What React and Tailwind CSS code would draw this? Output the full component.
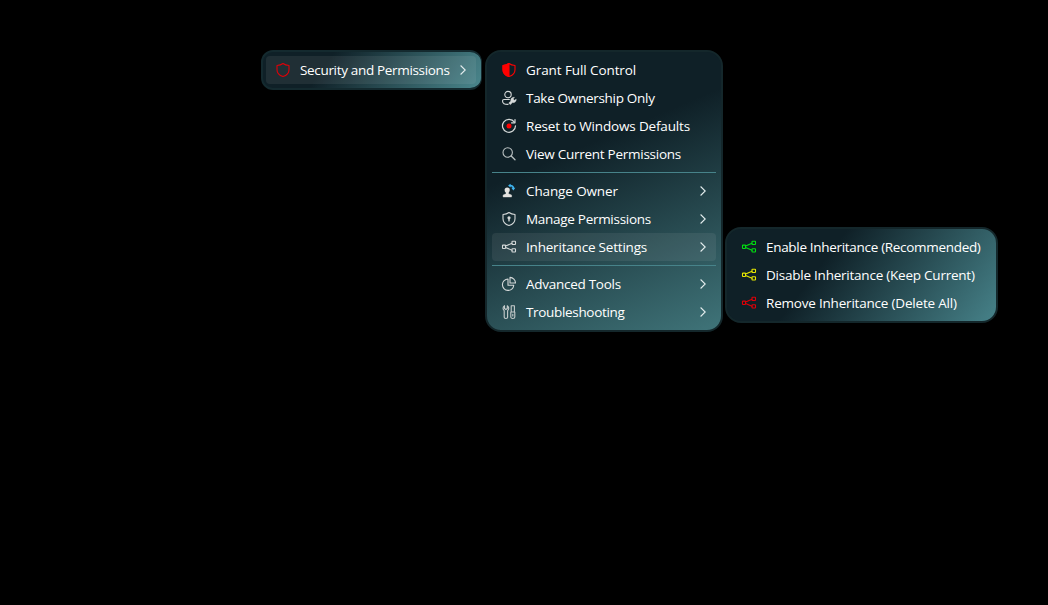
const ICON = 'h-4 w-4 shrink-0';

function Svg({ children, className = 'text-[#d5d9d9]' }) {
  return (
    <svg viewBox="0 0 16 16" fill="none" stroke="currentColor" strokeWidth="1.1" strokeLinecap="round" strokeLinejoin="round" className={`${ICON} ${className}`}>
      {children}
    </svg>
  );
}

const SHIELD = 'M8 1.5 C9.7 2.8 11.9 3.4 14 3.5 V7.7 C14 11.3 11.6 13.4 8 14.5 C4.4 13.4 2 11.3 2 7.7 V3.5 C4.1 3.4 6.3 2.8 8 1.5 Z';

const ShieldOutline = () => (
  <Svg className="text-[#e00008]"><path d={SHIELD} /></Svg>
);

const ShieldHalf = () => (
  <Svg className="text-[#ff0000]">
    <path d={SHIELD} />
    <path d="M8 1.5 V14.5 C4.4 13.4 2 11.3 2 7.7 V3.5 C4.1 3.4 6.3 2.8 8 1.5 Z" fill="currentColor" />
  </Svg>
);

const UserKey = () => (
  <Svg>
    <circle cx="7" cy="4.6" r="3.2" />
    <path d="M8.4 9.5 H3 C2 9.5 1.5 10.2 1.5 11.1 C1.5 13.4 3.6 14.5 7 14.4" />
    <path d="M13.4 7.3 A3 3 0 0 0 9.8 11 L7.6 13.1 L9.3 14.8 L11.6 12.6 A3 3 0 0 0 15.2 9 L13.5 10.3 L12.3 9.1 Z" fill="currentColor" stroke="currentColor" strokeWidth=".3" />
  </Svg>
);

const ResetDot = () => (
  <Svg>
    <path d="M13.4 4.2 A6.5 6.5 0 1 0 14.5 7.8" strokeWidth="1.2" />
    <path d="M14 1.5 V4.8 H10.5" strokeWidth="1.2" />
    <circle cx="8" cy="8" r="2.5" fill="#ff0000" stroke="none" />
  </Svg>
);

const Search = () => (
  <Svg className="text-[#b9c0c1]"><circle cx="6.7" cy="6.5" r="4.7" /><path d="M10.2 10 L14 13.8" strokeWidth="1.3" /></Svg>
);

const ChangeOwner = () => (
  <Svg>
    <circle cx="6.2" cy="7" r="2.6" fill="#e4e2df" stroke="none" />
    <path d="M5 8.6 H7.5 V10.8 L10.6 12 V14 H2.1 V12 L5 10.8 Z" fill="#e4e2df" stroke="#e4e2df" strokeWidth=".4" />
    <path d="M8.4 2.6 C11 2.2 12.4 3.6 12.4 5.4" stroke="#3fb4f0" strokeWidth="1.7" />
    <path d="M10.3 4.8 H14.3 L12.4 7.6 Z M7.4 2.5 L9.6 .7 V4.4 Z" fill="#3fb4f0" stroke="none" />
  </Svg>
);

const ShieldKey = () => (
  <Svg>
    <path d={SHIELD} />
    <circle cx="8" cy="6.8" r="1.6" fill="currentColor" stroke="none" />
    <path d="M8 7.2 V9.9" strokeWidth="1.4" />
  </Svg>
);

const Nodes = ({ className }) => (
  <Svg className={className}>
    <rect x="1.5" y="6.1" width="3" height="3.4" rx=".5" />
    <rect x="11" y="2.2" width="3.5" height="3.3" rx=".5" />
    <rect x="11" y="9.7" width="3.5" height="3.3" rx=".5" />
    <path d="M4.6 7.1 L11 4.2 M4.6 8.5 L11 11.2" />
  </Svg>
);

const Pie = () => (
  <Svg>
    <path d="M7 3 A5.7 5.7 0 1 0 12.8 9.3 H7 Z" />
    <path d="M9 1.4 A5.6 5.6 0 0 1 14.5 7 H9 Z" />
  </Svg>
);

const Tools = () => (
  <Svg className="text-[#c6cccc]">
    <path d="M3.5 1.7 V4.5 L4.9 5.5 L6.3 4.5 V1.7 C8.4 3.2 8 5.5 6.6 6.6 V13.2 C6.6 14.9 3.2 14.9 3.2 13.2 V6.6 C1.8 5.5 1.4 3.2 3.5 1.7 Z" />
    <path d="M10.2 1.7 H13.4 V8 H10.2 Z M9.8 8 H13.8 V13 C13.8 14.9 9.8 14.9 9.8 13 Z M11.8 10.2 V12" />
  </Svg>
);

const Chevron = () => (
  <svg viewBox="0 0 6 10" fill="none" stroke="#e4edee" strokeWidth="1.1" className="ml-auto h-2.5 w-1.5 shrink-0">
    <path d="M.6 .5 L5.2 5 L.6 9.5" />
  </svg>
);

function Item({ icon, label, spacing, sub, active }) {
  return (
    <div className={`flex h-7 items-center rounded pl-[9px] pr-[10px] ${active ? 'bg-[#fff4f4]/[0.07]' : ''}`}>
      {icon}
      <span className={`ml-[9px] whitespace-nowrap ${spacing}`}>{label}</span>
      {sub && <Chevron />}
    </div>
  );
}

const Separator = () => <div className="my-1 h-px bg-[#47838a]" />;

export default function App() {
  return (
    <main className="flex h-[605px] w-[1048px] items-start bg-black pl-[261px] pt-[50px] font-['Open_Sans',sans-serif] text-[13.5px] leading-5 text-white">
      <nav className="w-[221px] shrink-0 rounded-xl border-2 border-r border-[#142a2f] bg-[linear-gradient(125deg,#0f2027_0%,#0f2027_30%,#4b888e_100%)] bg-origin-border py-1 pl-[3px] pr-[5px]">
        <Item icon={<ShieldOutline />} label="Security and Permissions" spacing="tracking-[-0.33px]" sub active />
      </nav>
      <nav className="ml-[3px] w-[238px] shrink-0 rounded-2xl border-2 border-[#14272b] bg-[linear-gradient(157deg,#0f2027_0%,#0f2027_36%,#40757a_100%)] bg-origin-border px-[5px] py-1">
        <Item icon={<ShieldHalf />} label="Grant Full Control" spacing="tracking-[-0.09px]" />
        <Item icon={<UserKey />} label="Take Ownership Only" spacing="tracking-[-0.3px]" />
        <Item icon={<ResetDot />} label="Reset to Windows Defaults" spacing="tracking-[-0.16px]" />
        <Item icon={<Search />} label="View Current Permissions" spacing="tracking-[-0.26px]" />
        <Separator />
        <Item icon={<ChangeOwner />} label="Change Owner" spacing="tracking-[-0.12px]" sub />
        <Item icon={<ShieldKey />} label="Manage Permissions" spacing="tracking-[-0.29px]" sub />
        <Item icon={<Nodes />} label="Inheritance Settings" spacing="tracking-[-0.2px]" sub active />
        <Separator />
        <Item icon={<Pie />} label="Advanced Tools" spacing="tracking-[-0.27px]" sub />
        <Item icon={<Tools />} label="Troubleshooting" spacing="tracking-[-0.33px]" sub />
      </nav>
      <nav className="ml-[2px] mt-[177px] w-[273px] shrink-0 rounded-2xl border-2 border-[#14272b] bg-[linear-gradient(127deg,#0f2027_0%,#0f2027_36%,#47838a_100%)] bg-origin-border px-[5px] py-1">
        <Item icon={<Nodes className="text-[#00e010]" />} label="Enable Inheritance (Recommended)" spacing="tracking-[-0.31px]" />
        <Item icon={<Nodes className="text-[#e8e800]" />} label="Disable Inheritance (Keep Current)" spacing="tracking-[-0.23px]" />
        <Item icon={<Nodes className="text-[#e00008]" />} label="Remove Inheritance (Delete All)" spacing="tracking-[-0.2px]" />
      </nav>
    </main>
  );
}
